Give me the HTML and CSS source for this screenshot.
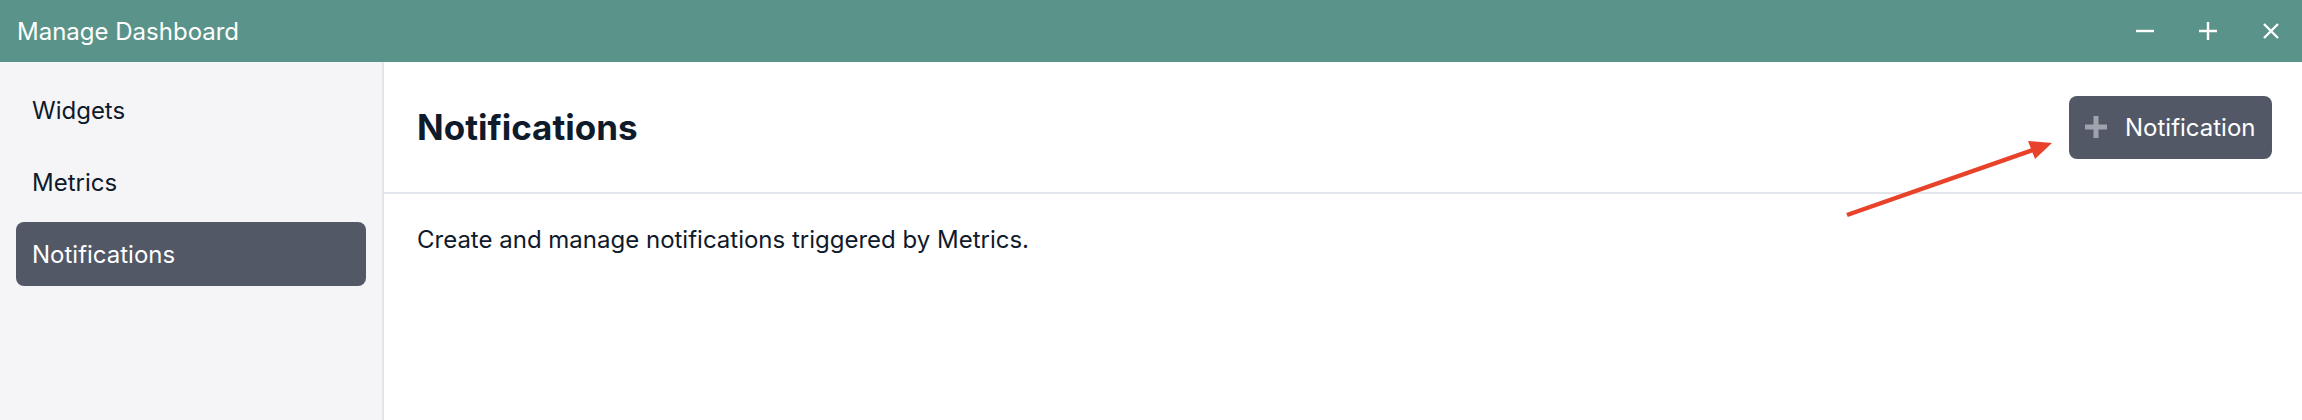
FILE: index.html
```html
<!DOCTYPE html>
<html lang="en">
<head>
<meta charset="utf-8">
<title>Manage Dashboard</title>
<link rel="stylesheet" href="styles.css">
</head>
<body>
<div class="window">
  <header class="titlebar">
    <span class="title">Manage Dashboard</span>
    <div class="controls">
      <svg class="ctl" viewBox="0 0 18 18" width="18" height="18"><path d="M0 9H18" stroke="#fff" stroke-width="2.4"/></svg>
      <svg class="ctl" viewBox="0 0 18 18" width="18" height="18"><path d="M0 9H18M9 0V18" stroke="#fff" stroke-width="2.4"/></svg>
      <svg class="ctl" viewBox="0 0 18 18" width="18" height="18"><path d="M2 2L16 16M16 2L2 16" stroke="#fff" stroke-width="2.4"/></svg>
    </div>
  </header>
  <div class="body">
    <nav class="sidebar">
      <a class="nav-item">Widgets</a>
      <a class="nav-item">Metrics</a>
      <a class="nav-item active">Notifications</a>
    </nav>
    <main class="main">
      <div class="main-header">
        <h1 class="heading">Notifications</h1>
        <button class="btn">
          <svg class="btn-icon" viewBox="0 0 22 22" width="22" height="22"><path d="M11 0V22M0 11H22" stroke="#9ea3ad" stroke-width="5"/></svg>
          <span>Notification</span>
        </button>
      </div>
      <div class="main-content">
        <p class="desc">Create and manage notifications triggered by Metrics.</p>
      </div>
    </main>
  </div>
  <svg class="arrow" viewBox="0 0 2302 420" width="2302" height="420">
    <line x1="1847" y1="215" x2="2036" y2="149" stroke="#e8432a" stroke-width="4.5"/>
    <polygon points="2052,143 2028,141 2035,159" fill="#e8432a"/>
  </svg>
</div>
</body>
</html>
```
FILE: styles.css
```css
* { box-sizing: border-box; }
html, body {
  margin: 0;
  padding: 0;
  width: 2302px;
  height: 420px;
  overflow: hidden;
  font-family: Inter, "Noto Sans", sans-serif;
  color: #0f1a2b;
  background: #fff;
}
.window {
  position: relative;
  width: 2302px;
  height: 420px;
  display: flex;
  flex-direction: column;
}
.titlebar {
  height: 62px;
  flex: none;
  background: #5a9389;
  color: #fff;
  display: flex;
  align-items: center;
  justify-content: space-between;
  padding: 0 22px 0 17px;
}
.title {
  font-size: 24px;
  font-weight: 400;
}
.controls {
  display: flex;
  align-items: center;
  gap: 45px;
}
.ctl { display: block; }
.body {
  flex: 1;
  display: flex;
  min-height: 0;
}
.sidebar {
  width: 384px;
  flex: none;
  background: #f5f5f8;
  border-right: 2px solid #e2e5ec;
  padding: 16px 16px;
  display: flex;
  flex-direction: column;
  gap: 8px;
}
.nav-item {
  height: 64px;
  display: flex;
  align-items: center;
  padding: 0 16px;
  font-size: 24px;
  color: #0f1a2b;
  border-radius: 8px;
}
.nav-item.active {
  background: #525866;
  color: #fff;
}
.main {
  flex: 1;
  display: flex;
  flex-direction: column;
}
.main-header {
  height: 132px;
  flex: none;
  display: flex;
  align-items: center;
  justify-content: space-between;
  padding: 0 30px 0 33px;
  border-bottom: 2px solid #e2e5ec;
}
.heading {
  margin: 0;
  font-size: 35px;
  line-height: 42px;
  font-weight: 700;
  color: #0f1a2b;
}
.btn {
  height: 63px;
  width: 203px;
  border: none;
  border-radius: 8px;
  background: #525866;
  color: #fff;
  font-family: Inter, "Noto Sans", sans-serif;
  font-size: 24px;
  display: flex;
  align-items: center;
  gap: 18px;
  padding: 0 16px;
}
.btn-icon { display: block; flex: none; }
.main-content {
  padding: 28px 33px;
}
.desc {
  margin: 0;
  font-size: 24px;
  line-height: 36px;
}
.arrow {
  position: absolute;
  left: 0;
  top: 0;
  pointer-events: none;
}
```
